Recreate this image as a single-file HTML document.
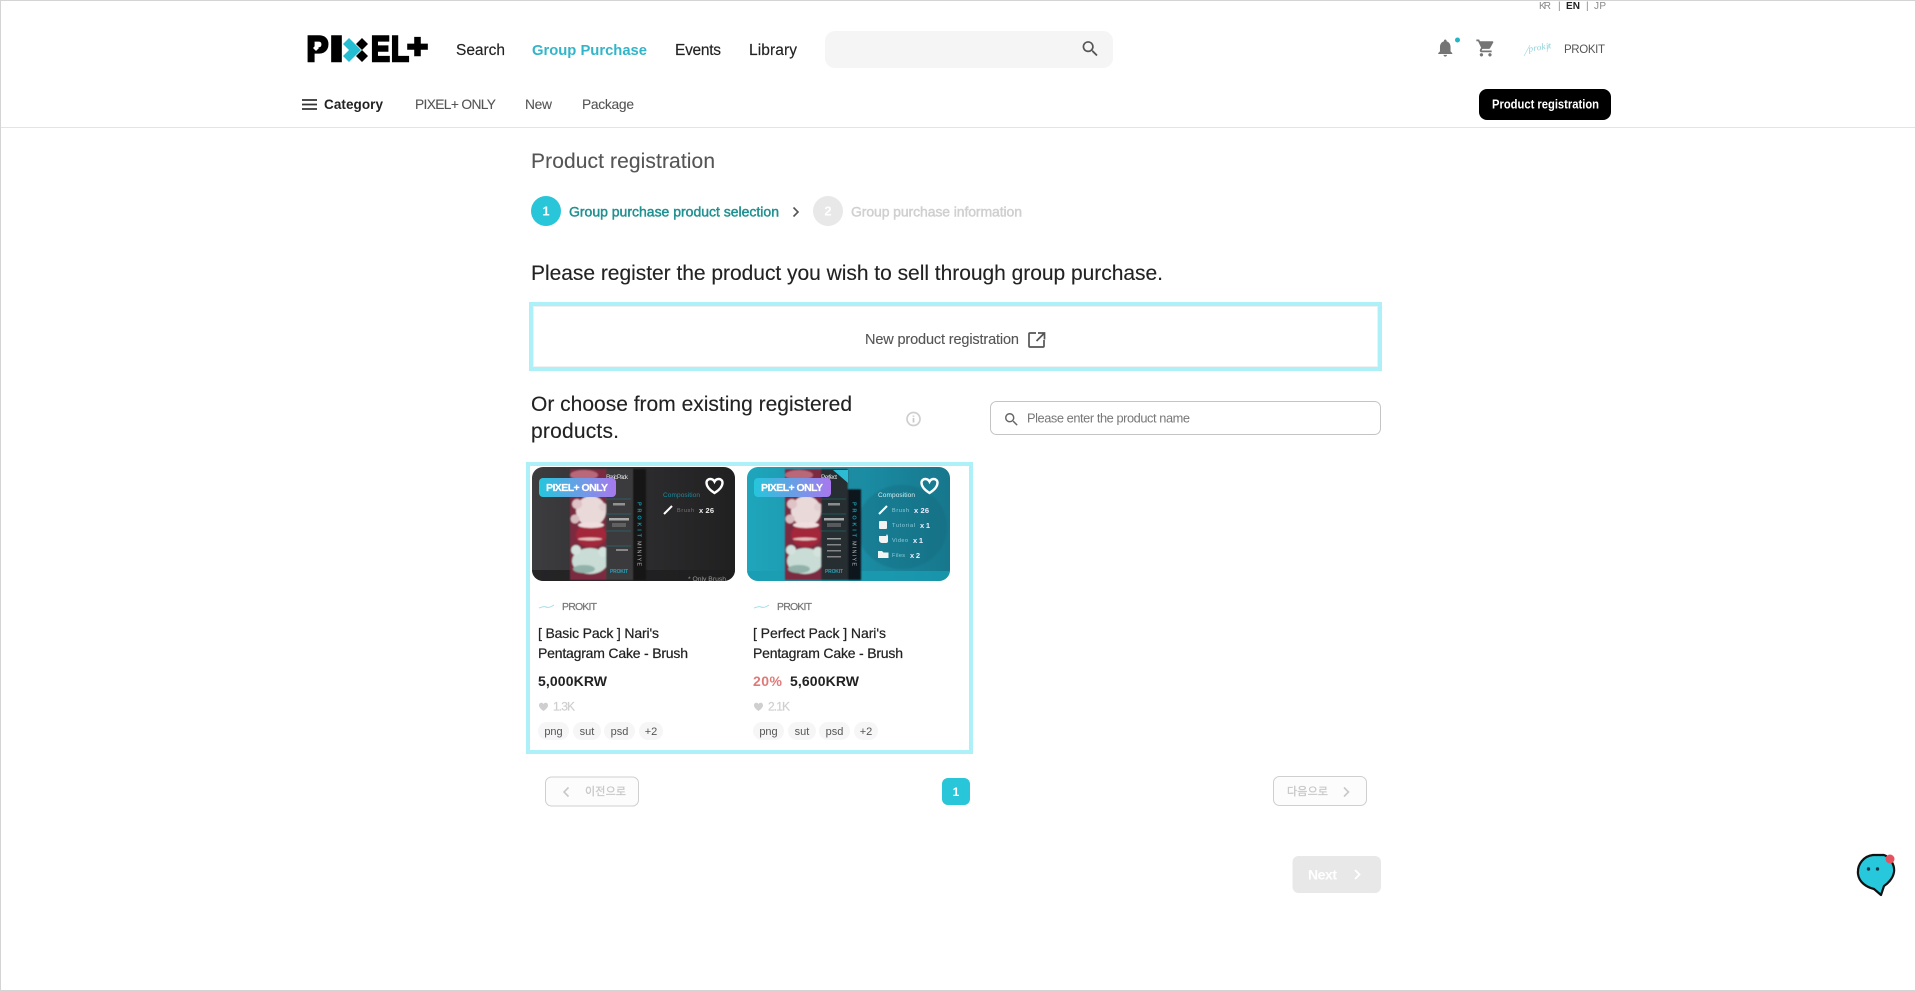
<!DOCTYPE html>
<html lang="en">
<head>
<meta charset="utf-8">
<title>Product registration - PIXEL+</title>
<style>
html,body{margin:0;padding:0;background:#fff;width:1916px;height:991px;overflow:hidden}
svg{display:block;filter:blur(.3px)}
text{font-family:"Liberation Sans","Noto Sans CJK KR",sans-serif;white-space:pre}
.med{stroke-width:.45px;paint-order:stroke}
.b{font-weight:700}
</style>
</head>
<body>
<svg xmlns="http://www.w3.org/2000/svg" width="1916" height="991" viewBox="0 0 1916 991">
<defs>
<linearGradient id="badge" x1="0" x2="1" y1="0" y2="0"><stop offset="0" stop-color="#25c6dc"/><stop offset="1" stop-color="#a878ee"/></linearGradient>
<linearGradient id="bgA" x1="0" x2="1" y1="0" y2="0"><stop offset="0" stop-color="#3d3d3f"/><stop offset=".55" stop-color="#2c2c2e"/><stop offset="1" stop-color="#202021"/></linearGradient>
<linearGradient id="bgB" x1="0" x2="1" y1="0" y2="0"><stop offset="0" stop-color="#1fa6bc"/><stop offset=".6" stop-color="#1a8ba2"/><stop offset="1" stop-color="#17778c"/></linearGradient>
<clipPath id="cardClip"><rect width="203" height="114" rx="11"/></clipPath>
<filter id="soft" x="-5%" y="-5%" width="110%" height="110%"><feGaussianBlur stdDeviation=".8"/></filter>
<filter id="soft2" x="-5%" y="-5%" width="110%" height="110%"><feGaussianBlur stdDeviation=".25"/></filter>
</defs>

<rect width="1916" height="991" fill="#fff"/>

<!-- Language -->
<g font-size="10">
<text x="1539" y="9" fill="#888" textLength="12">KR</text>
<text x="1558" y="9" fill="#888">|</text>
<text x="1566" y="9" fill="#222" class="b" textLength="14">EN</text>
<text x="1586" y="9" fill="#888">|</text>
<text x="1594" y="9" fill="#888" textLength="12">JP</text>
</g>

<!-- Logo -->
<g fill="#000" stroke="#000" stroke-width="2.4" font-weight="700" font-size="35">
<text x="306.500" y="61" textLength="22" lengthAdjust="spacingAndGlyphs">P</text>
<text x="329.500" y="61" textLength="14" lengthAdjust="spacingAndGlyphs">I</text>
<text x="371" y="61" textLength="19" lengthAdjust="spacingAndGlyphs">E</text>
<text x="391" y="61" textLength="18" lengthAdjust="spacingAndGlyphs">L</text>
</g>
<text x="407" y="57.500" font-size="33" font-weight="700" stroke="#000" stroke-width="2.4" fill="#000" textLength="21" lengthAdjust="spacingAndGlyphs">+</text>
<path d="M343 44l6-6 12 12-12 12-6-6 6-6z" fill="#25bdd2"/>
<path d="M362 38l6 6-6 6 6 6-6 6-6-6 6-6-6-6z" fill="#000"/>
<path d="M316 45l3 3-3 3-3-3z" fill="#fff"/>

<!-- Main nav -->
<g font-size="15.500" fill="#222" stroke="#222" stroke-width=".15">
<text x="456" y="55" textLength="49">Search</text>
<text x="675" y="55" textLength="46">Events</text>
<text x="749" y="55" textLength="48">Library</text>
</g>
<text x="532" y="55" font-size="14.800" class="b" fill="#33b5c9" textLength="115">Group Purchase</text>

<!-- Search -->
<rect x="825" y="31" width="288" height="37" rx="10" fill="#f5f5f5"/>
<path transform="translate(1080 38.500) scale(.86)" fill="#555" d="M15.5 14h-.79l-.28-.27C15.41 12.59 16 11.11 16 9.5 16 5.91 13.09 3 9.5 3S3 5.91 3 9.5 5.91 16 9.5 16c1.61 0 3.09-.59 4.23-1.57l.27.28v.79l5 4.99L20.49 19l-4.99-5zm-6 0C7.01 14 5 11.99 5 9.5S7.01 5 9.5 5 14 7.01 14 9.5 11.99 14 9.5 14z"/>

<!-- Header icons -->
<path transform="translate(1434.700 37.300) scale(.88)" fill="#757575" d="M12 22c1.1 0 2-.9 2-2h-4c0 1.1.9 2 2 2zm6-6v-5c0-3.07-1.63-5.64-4.5-6.32V4c0-.83-.67-1.5-1.5-1.500s-1.500.67-1.500 1.500v.68C7.640 5.360 6 7.920 6 11v5l-2 2v1h16v-1l-2-2z"/>
<circle cx="1457.500" cy="40" r="2.500" fill="#25b5c5"/>
<path transform="translate(1475.500 37.800) scale(.85)" fill="#757575" d="M7 18c-1.100 0-1.990.9-1.990 2S5.900 22 7 22s2-.9 2-2-.9-2-2-2zM1 2v2h2l3.600 7.590-1.350 2.450c-.16.28-.25.61-.25.96 0 1.100.9 2 2 2h12v-2H7.420c-.14 0-.25-.11-.25-.25l.03-.12.9-1.630h7.450c.75 0 1.410-.41 1.750-1.030l3.580-6.490c.08-.14.12-.31.12-.48 0-.55-.45-1-1-1H5.210l-.94-2H1zm16 16c-1.100 0-1.990.9-1.990 2s.89 2 1.990 2 2-.9 2-2-.9-2-2-2z"/>
<text transform="translate(1529 52) rotate(-10)" font-size="9" font-style="italic" fill="#8fd0da" style="font-family:'Liberation Serif',serif" textLength="23">prokit</text>
<path d="M1524 56l6-11M1549 44l-2 8" stroke="#a5dde4" stroke-width=".7" fill="none"/>
<text x="1564" y="53" font-size="11.500" fill="#555" textLength="41">PROKIT</text>

<!-- Sub nav -->
<path d="M302 100h15M302 104.500h15M302 109h15" stroke="#333" stroke-width="1.700" fill="none"/>
<text x="324" y="109" font-size="13.500" class="b" fill="#222" textLength="59">Category</text>
<g font-size="13.800" fill="#555" stroke="#555" stroke-width=".1">
<text x="415" y="109" textLength="81">PIXEL+ ONLY</text>
<text x="525" y="109" textLength="27">New</text>
<text x="582" y="109" textLength="52">Package</text>
</g>
<rect x="1479" y="89" width="132" height="31" rx="8" fill="#000"/>
<text x="1492" y="108.500" font-size="12.500" class="b" fill="#fff" textLength="107" lengthAdjust="spacingAndGlyphs">Product registration</text>
<rect x="0" y="127" width="1916" height="1" fill="#e4e4e4"/>

<!-- Title -->
<text x="531" y="168" font-size="21" fill="#555" stroke="#555" stroke-width=".1" textLength="184">Product registration</text>

<!-- Steps -->
<circle cx="546" cy="211" r="15" fill="#29c5d9"/>
<text x="546" y="215.500" font-size="13" class="b" fill="#fff" text-anchor="middle">1</text>
<text x="569" y="216.500" font-size="14" fill="#1f9090" stroke="#1f9090" class="med" textLength="210">Group purchase product selection</text>
<path d="M793.500 207.500l4.500 4.500-4.500 4.500" fill="none" stroke="#555" stroke-width="1.600"/>
<circle cx="828" cy="211" r="15" fill="#e8e8e8"/>
<text x="828" y="215.500" font-size="13" class="b" fill="#fff" text-anchor="middle">2</text>
<text x="851" y="216.500" font-size="14" fill="#cfcfcf" stroke="#cfcfcf" class="med" textLength="171">Group purchase information</text>

<!-- Heading -->
<text x="531" y="280" font-size="21" fill="#222" stroke="#222" stroke-width=".12" textLength="632">Please register the product you wish to sell through group purchase.</text>

<!-- New product -->
<rect x="531" y="304" width="849" height="65" fill="#fff" stroke="#aef0f7" stroke-width="4"/>
<rect x="533.500" y="306.500" width="844" height="60" fill="none" stroke="#f0f0f0" stroke-width="1"/>
<text x="865" y="344" font-size="14.500" fill="#555" stroke="#555" stroke-width=".12" textLength="154">New product registration</text>
<path d="M1036 333h-6a1 1 0 0 0-1 1v12a1 1 0 0 0 1 1h13a1 1 0 0 0 1-1v-6M1038 333h6.500v6.500M1044 333.500l-7.500 7.500" fill="none" stroke="#555" stroke-width="1.700"/>

<!-- Or choose -->
<g font-size="21" fill="#222" stroke="#222" stroke-width=".12">
<text x="531" y="411" textLength="321">Or choose from existing registered</text>
<text x="531" y="438" textLength="88">products.</text>
</g>
<circle cx="913.500" cy="419" r="6.500" fill="none" stroke="#cfcfcf" stroke-width="1.700"/>
<path d="M913.500 415.500v1.200M913.500 418v4.500" stroke="#c8c8c8" stroke-width="1.700"/>

<rect x="990.500" y="401.500" width="390" height="33" rx="6" fill="#fff" stroke="#c4c4c4"/>
<path transform="translate(1002.900 410.900) scale(.72)" fill="#666" d="M15.500 14h-.79l-.28-.27C15.410 12.590 16 11.110 16 9.500 16 5.910 13.090 3 9.500 3S3 5.910 3 9.500 5.910 16 9.500 16c1.610 0 3.090-.59 4.230-1.570l.27.28v.79l5 4.990L20.490 19l-4.990-5zm-6 0C7.010 14 5 11.990 5 9.500S7.010 5 9.500 5 14 7.010 14 9.500 11.990 14 9.500 14z"/>
<text x="1027" y="422.500" font-size="12.800" fill="#777" textLength="163">Please enter the product name</text>

<!-- Cards wrapper -->
<rect x="528" y="464" width="443" height="288" fill="#fff" stroke="#aef0f7" stroke-width="4"/>

<!-- Card 1 image -->
<g transform="translate(532 467)" clip-path="url(#cardClip)">
<rect width="203" height="114" fill="url(#bgA)"/>
<rect y="103" width="203" height="11" fill="#1e1e1f" opacity=".75"/>
<g filter="url(#soft)">
<rect x="38" y="2" width="36" height="111" fill="#7b2b3f"/>
<ellipse cx="52" cy="8" rx="14" ry="5" fill="#b9677a"/>
<ellipse cx="46" cy="20" rx="7" ry="4" fill="#a34d60"/>
<ellipse cx="59" cy="44" rx="15" ry="15" fill="#e9d9d9"/>
<circle cx="45" cy="37" r="5" fill="#dfc3c6"/>
<circle cx="43" cy="52" r="4.500" fill="#d9bcc0"/>
<circle cx="71" cy="40" r="4" fill="#e0cdd0"/>
<ellipse cx="59" cy="68" rx="15" ry="12" fill="#a4283a"/>
<ellipse cx="59" cy="58" rx="13" ry="3" fill="#f0dede"/>
<ellipse cx="58" cy="72" rx="12" ry="1.500" fill="#e6c0c0"/>
<ellipse cx="58" cy="94" rx="18" ry="13" fill="#c9dcd5"/>
<circle cx="44" cy="83" r="5" fill="#d3e2dc"/>
<circle cx="71" cy="85" r="5" fill="#d3e2dc"/>
<ellipse cx="52" cy="102" rx="11" ry="4" fill="#90b2a9"/>
<rect x="74" y="2" width="27" height="111" fill="#3a3a3d"/>
<rect x="101" y="2" width="13" height="111" fill="#131618"/>
</g>
<g filter="url(#soft2)">
<text x="74" y="12" font-size="6.500" fill="#ddd" textLength="22">Basic Pack</text>
<path d="M74 32h25M74 47h25M74 64h25M74 79h25" stroke="#1f8c9a" stroke-width=".6" opacity=".8"/>
<rect x="81" y="36" width="12" height="2.500" fill="#ccc" opacity=".6"/>
<rect x="77" y="51" width="20" height="2.500" fill="#ddd" opacity=".7"/>
<rect x="80" y="56" width="14" height="4" fill="#888" opacity=".5"/>
<rect x="84" y="82" width="12" height="2" fill="#bbb" opacity=".6"/>
<text x="78" y="106" font-size="5" class="b" fill="#2a9fb5" textLength="18">PROKIT</text>
<text transform="translate(105.500 35) rotate(90)" font-size="5.500" fill="#1b99ad" class="b" textLength="35">PROKIT</text>
<text transform="translate(105.500 74) rotate(90)" font-size="5.500" fill="#bbb" textLength="25">MINIYE</text>
<text x="131" y="30" font-size="6.500" fill="#1a8a9c" textLength="37">Composition</text>
<path d="M132 47l8-8" stroke="#fff" stroke-width="2"/>
<text x="145" y="45" font-size="5.500" fill="#777" textLength="17">Brush</text>
<text x="167" y="46" font-size="7.500" class="b" fill="#eee" textLength="15">x 26</text>
<text x="156" y="114" font-size="6.800" fill="#999" textLength="38">* Only Brush</text>
</g>
<rect x="7" y="11" width="77" height="19" rx="4" fill="url(#badge)"/>
<text x="14" y="24" font-size="10.500" class="b" fill="#fff" stroke="#fff" stroke-width=".2" textLength="62">PIXEL+ ONLY</text>
<path d="M182.500 26c-7-4.500-8-8-8-10.300 0-2.400 2-3.700 3.900-3.700 1.700 0 3.300 1 4.100 2.600.8-1.600 2.400-2.600 4.100-2.600 1.900 0 3.900 1.300 3.900 3.700 0 2.300-1 5.800-8 10.300z" fill="none" stroke="#fff" stroke-width="2.400"/>
</g>

<!-- Card 2 image -->
<g transform="translate(747 467)" clip-path="url(#cardClip)">
<rect width="203" height="114" fill="url(#bgB)"/>
<rect y="104" width="203" height="10" fill="#1a9cb2" opacity=".8"/>
<ellipse cx="155" cy="60" rx="45" ry="42" fill="#14687c" opacity=".35" filter="url(#soft)"/>
<g filter="url(#soft)">
<rect x="38" y="2" width="36" height="111" fill="#7b2b3f"/>
<ellipse cx="52" cy="8" rx="14" ry="5" fill="#b9677a"/>
<ellipse cx="46" cy="20" rx="7" ry="4" fill="#a34d60"/>
<ellipse cx="59" cy="44" rx="15" ry="15" fill="#e9d9d9"/>
<circle cx="45" cy="37" r="5" fill="#dfc3c6"/>
<circle cx="43" cy="52" r="4.500" fill="#d9bcc0"/>
<circle cx="71" cy="40" r="4" fill="#e0cdd0"/>
<ellipse cx="59" cy="68" rx="15" ry="12" fill="#a4283a"/>
<ellipse cx="59" cy="58" rx="13" ry="3" fill="#f0dede"/>
<ellipse cx="58" cy="72" rx="12" ry="1.500" fill="#e6c0c0"/>
<ellipse cx="58" cy="94" rx="18" ry="13" fill="#c9dcd5"/>
<circle cx="44" cy="83" r="5" fill="#d3e2dc"/>
<circle cx="71" cy="85" r="5" fill="#d3e2dc"/>
<ellipse cx="52" cy="102" rx="11" ry="4" fill="#90b2a9"/>
<rect x="74" y="2" width="27" height="111" fill="#282d32"/>
<rect x="101" y="2" width="13" height="20" fill="#1f8ca3"/>
<rect x="101" y="22" width="13" height="91" fill="#10181c"/>
</g>
<path d="M86 3h15v13z" fill="#2bbcd3"/>
<g filter="url(#soft2)">
<text x="74" y="12" font-size="6.500" fill="#ddd" textLength="16">Perfect</text>
<path d="M74 32h25M74 47h25M74 64h25" stroke="#1f8c9a" stroke-width=".6" opacity=".8"/>
<rect x="81" y="36" width="12" height="2.500" fill="#ccc" opacity=".6"/>
<rect x="77" y="51" width="20" height="2.500" fill="#ddd" opacity=".7"/>
<rect x="80" y="56" width="14" height="4" fill="#888" opacity=".5"/>
<rect x="80" y="71" width="14" height="1.500" fill="#ccc" opacity=".7"/>
<rect x="80" y="77" width="14" height="1.500" fill="#aaa" opacity=".7"/>
<rect x="80" y="83" width="14" height="1.500" fill="#aaa" opacity=".7"/>
<rect x="80" y="89" width="14" height="1.500" fill="#aaa" opacity=".7"/>
<text x="78" y="106" font-size="5" class="b" fill="#2a9fb5" textLength="18">PROKIT</text>
<text transform="translate(105.500 35) rotate(90)" font-size="5.500" fill="#1b99ad" class="b" textLength="35">PROKIT</text>
<text transform="translate(105.500 74) rotate(90)" font-size="5.500" fill="#bbb" textLength="25">MINIYE</text>
<text x="131" y="30" font-size="6.500" fill="#d5eef2" textLength="37">Composition</text>
<path d="M132 47l8-8" stroke="#fff" stroke-width="2"/>
<text x="145" y="45" font-size="5.500" fill="#8fd0dd" textLength="17">Brush</text>
<text x="167" y="46" font-size="7.500" class="b" fill="#eef" textLength="15">x 26</text>
<rect x="132" y="54" width="8" height="8" rx="1" fill="#f3f3f3"/>
<text x="145" y="60" font-size="5.500" fill="#8fd0dd" textLength="23">Tutorial</text>
<text x="173" y="61" font-size="7.500" class="b" fill="#eef" textLength="10">x 1</text>
<path d="M132 69h7l1-2 1 2v5a2 2 0 0 1-2 2h-4a3 3 0 0 1-3-3z" fill="#f3f3f3"/>
<text x="145" y="75" font-size="5.500" fill="#8fd0dd" textLength="16">Video</text>
<text x="166" y="76" font-size="7.500" class="b" fill="#eef" textLength="10">x 1</text>
<path d="M131 84h4l1.500 1.500h5V91h-10.500z" fill="#f3f3f3"/>
<text x="145" y="90" font-size="5.500" fill="#8fd0dd" textLength="13">Files</text>
<text x="163" y="91" font-size="7.500" class="b" fill="#eef" textLength="10">x 2</text>
</g>
<rect x="7" y="11" width="77" height="19" rx="4" fill="url(#badge)"/>
<text x="14" y="24" font-size="10.500" class="b" fill="#fff" stroke="#fff" stroke-width=".2" textLength="62">PIXEL+ ONLY</text>
<path d="M182.500 26c-7-4.500-8-8-8-10.300 0-2.400 2-3.700 3.900-3.700 1.700 0 3.300 1 4.100 2.600.8-1.600 2.400-2.600 4.100-2.600 1.900 0 3.900 1.300 3.900 3.700 0 2.300-1 5.800-8 10.300z" fill="none" stroke="#fff" stroke-width="2.400"/>
</g>

<!-- Card 1 info -->
<path d="M539 608c3-1 5-2 7-1s5 0 8-2" stroke="#a5dfe6" stroke-width="1" fill="none"/>
<text x="562" y="610" font-size="10.500" fill="#777" stroke="#777" stroke-width=".2" textLength="35">PROKIT</text>
<g font-size="14" fill="#222" stroke="#222" stroke-width=".22">
<text x="538" y="638" textLength="121">[ Basic Pack ] Nari's</text>
<text x="538" y="658" textLength="150">Pentagram Cake - Brush</text>
</g>
<text x="538" y="686" font-size="14" class="b" fill="#222" textLength="69">5,000KRW</text>
<path d="M543.500 711c-3.500-2.500-4.500-4.200-4.500-5.800 0-1.500 1.100-2.400 2.400-2.400 1 0 1.700.5 2.100 1.300.4-.8 1.100-1.300 2.100-1.300 1.300 0 2.400.9 2.400 2.400 0 1.600-1 3.300-4.500 5.800z" fill="#cfcfcf"/>
<text x="553" y="710.500" font-size="12" fill="#cfcfcf" stroke="#cfcfcf" stroke-width=".2" textLength="22">1.3K</text>
<g>
<rect x="538" y="722" width="31" height="18" rx="9" fill="#f6f6f6"/><text x="553.500" y="735" font-size="11" fill="#555" text-anchor="middle">png</text>
<rect x="573" y="722" width="28" height="18" rx="9" fill="#f6f6f6"/><text x="587" y="735" font-size="11" fill="#555" text-anchor="middle">sut</text>
<rect x="604" y="722" width="31" height="18" rx="9" fill="#f6f6f6"/><text x="619.500" y="735" font-size="11" fill="#555" text-anchor="middle">psd</text>
<rect x="639" y="722" width="24" height="18" rx="9" fill="#f6f6f6"/><text x="651" y="735" font-size="11" fill="#555" text-anchor="middle">+2</text>
</g>

<!-- Card 2 info -->
<path d="M754 608c3-1 5-2 7-1s5 0 8-2" stroke="#a5dfe6" stroke-width="1" fill="none"/>
<text x="777" y="610" font-size="10.500" fill="#777" stroke="#777" stroke-width=".2" textLength="35">PROKIT</text>
<g font-size="14" fill="#222" stroke="#222" stroke-width=".22">
<text x="753" y="638" textLength="133">[ Perfect Pack ] Nari's</text>
<text x="753" y="658" textLength="150">Pentagram Cake - Brush</text>
</g>
<text x="753" y="686" font-size="14" class="b" fill="#e07a78" textLength="29">20%</text>
<text x="790" y="686" font-size="14" class="b" fill="#222" textLength="69">5,600KRW</text>
<path d="M758.500 711c-3.500-2.500-4.500-4.200-4.500-5.800 0-1.500 1.100-2.400 2.400-2.400 1 0 1.700.5 2.100 1.300.4-.8 1.100-1.300 2.100-1.300 1.300 0 2.400.9 2.400 2.400 0 1.600-1 3.300-4.500 5.800z" fill="#cfcfcf"/>
<text x="768" y="710.500" font-size="12" fill="#cfcfcf" stroke="#cfcfcf" stroke-width=".2" textLength="22">2.1K</text>
<g>
<rect x="753" y="722" width="31" height="18" rx="9" fill="#f6f6f6"/><text x="768.500" y="735" font-size="11" fill="#555" text-anchor="middle">png</text>
<rect x="788" y="722" width="28" height="18" rx="9" fill="#f6f6f6"/><text x="802" y="735" font-size="11" fill="#555" text-anchor="middle">sut</text>
<rect x="819" y="722" width="31" height="18" rx="9" fill="#f6f6f6"/><text x="834.500" y="735" font-size="11" fill="#555" text-anchor="middle">psd</text>
<rect x="854" y="722" width="24" height="18" rx="9" fill="#f6f6f6"/><text x="866" y="735" font-size="11" fill="#555" text-anchor="middle">+2</text>
</g>

<!-- Pagination -->
<rect x="545.500" y="777" width="93" height="29" rx="6" fill="#fcfcfc" stroke="#cfcfcf"/>
<path d="M568.500 787.500l-4.500 4.500 4.500 4.500" fill="none" stroke="#c8c8c8" stroke-width="1.600"/>
<text x="585" y="795" font-size="11" fill="#c8c8c8" stroke="#c8c8c8" stroke-width=".3" textLength="41">이전으로</text>
<rect x="942" y="778" width="28" height="27" rx="6" fill="#29c5d9"/>
<text x="956" y="796" font-size="12" class="b" fill="#fff" text-anchor="middle">1</text>
<rect x="1273.500" y="776.500" width="93" height="29" rx="6" fill="#fcfcfc" stroke="#cfcfcf"/>
<text x="1287" y="795" font-size="11" fill="#c8c8c8" stroke="#c8c8c8" stroke-width=".3" textLength="41">다음으로</text>
<path d="M1344 787.500l4.500 4.500-4.500 4.500" fill="none" stroke="#c8c8c8" stroke-width="1.600"/>

<!-- Next -->
<rect x="1292.500" y="856" width="88.500" height="37" rx="6" fill="#e8e8e8"/>
<text x="1308" y="879.500" font-size="14" class="b" fill="#fff" textLength="29">Next</text>
<path d="M1355 870l4.500 4.500-4.500 4.500" fill="none" stroke="#fff" stroke-width="1.800"/>

<!-- Chat bubble -->
<path d="M1858 874C1857 864 1864 856 1873 855L1884 855C1890 857 1895 865 1894 872C1893 879 1887 884 1884 886L1881 895L1874 889C1866 887 1859 882 1858 874Z" fill="#27c8dc" stroke="#111" stroke-width="2.200" stroke-linejoin="round"/>
<circle cx="1868.500" cy="869" r="1.700" fill="#17384a"/>
<circle cx="1877.500" cy="869" r="1.700" fill="#17384a"/>
<circle cx="1890" cy="859" r="4.500" fill="#e5525f"/>

<!-- Page frame -->
<rect x=".5" y=".5" width="1915" height="990" fill="none" stroke="#d4d4d4"/>
</svg>
</body>
</html>
